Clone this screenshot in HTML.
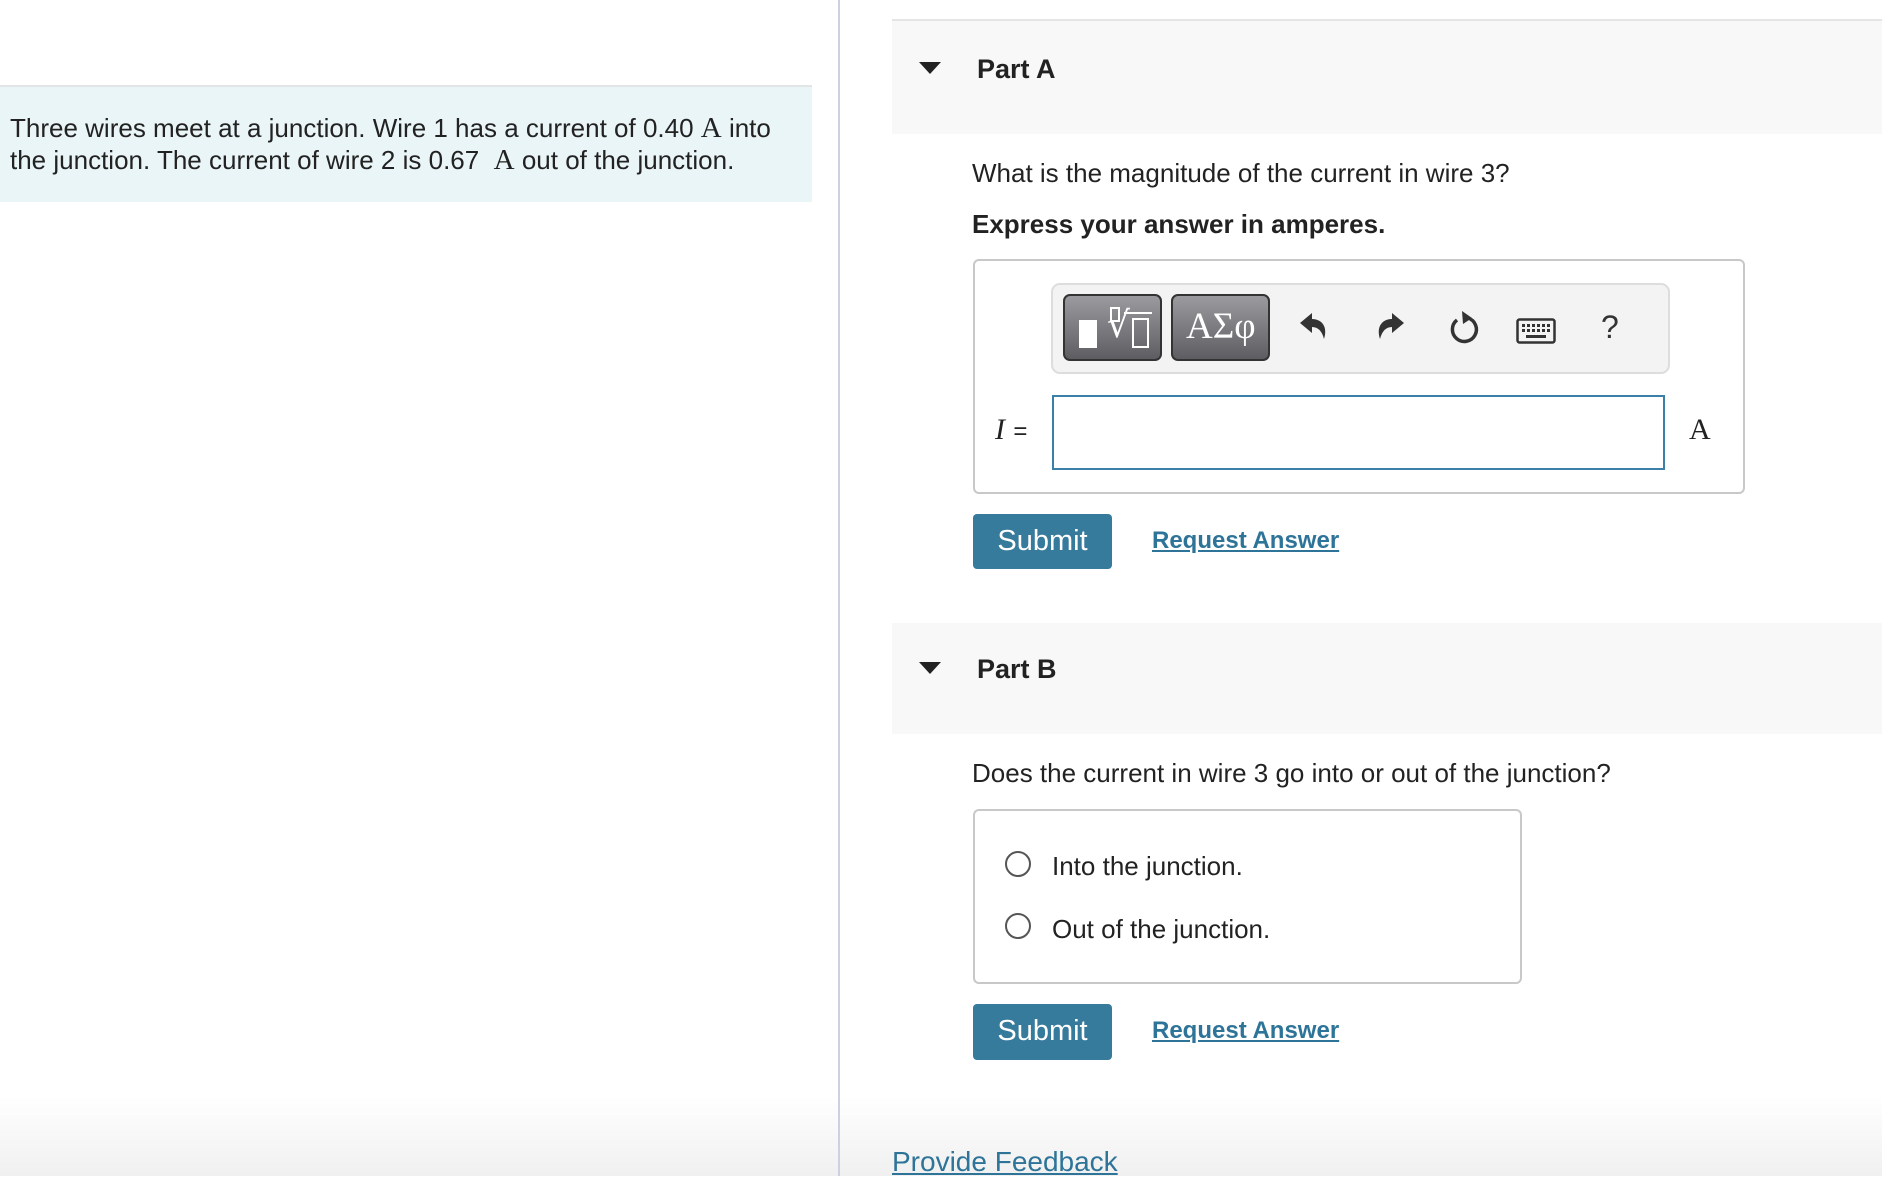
<!DOCTYPE html>
<html><head><meta charset="utf-8"><style>
*{margin:0;padding:0;box-sizing:border-box}
body{width:1882px;height:1176px;overflow:hidden;background:#fff;font-family:"Liberation Sans",Arial,sans-serif;color:#222;position:relative}
.abs{position:absolute}
.fade{left:0;right:0;bottom:0;height:80px;background:linear-gradient(#fff0,#f0f0f0)}
.t{white-space:nowrap}
.serif{font-family:"Liberation Serif",serif}
.hdr{left:892px;right:0;background:#f8f8f8}
.tri{width:0;height:0;border-left:11px solid transparent;border-right:11px solid transparent;border-top:12px solid #222}
.btn{background:#367a9c;color:#fff;border-radius:4px;font-size:29px;text-align:center;line-height:55px}
.link{color:#2e7498;font-weight:bold;text-decoration:underline;font-size:24px}
.tb{background:linear-gradient(#9a9a9f,#5e5e62);border:2px solid #333;border-radius:7px}
.radio{width:26px;height:26px;border:2px solid #555;border-radius:50%;background:#fff}
</style></head><body>
<div class="abs fade"></div>
<div class="abs" style="left:0;top:85px;width:812px;height:2px;background:#e2e4e6"></div>
<div class="abs" style="left:0;top:87px;width:812px;height:115px;background:#eaf5f7"></div>
<div class="abs t" style="left:10px;top:112px;font-size:26px;line-height:32px">Three wires meet at a junction. Wire 1 has a current of 0.40 <span class="serif" style="font-size:29px">A</span> into<br>the junction. The current of wire 2 is 0.67 &nbsp;<span class="serif" style="font-size:29px">A</span> out of the junction.</div>
<div class="abs" style="left:838px;top:0;width:2px;height:1176px;background:#c9d2de"></div>

<div class="abs" style="left:892px;top:19px;right:0;height:2px;background:#e5e5e5"></div>
<div class="abs hdr" style="top:21px;height:113px"></div>
<div class="abs tri" style="left:919px;top:62px"></div>
<div class="abs t" style="left:977px;top:54px;font-size:27px;font-weight:bold">Part A</div>
<div class="abs t" style="left:972px;top:158px;font-size:26px">What is the magnitude of the current in wire 3?</div>
<div class="abs t" style="left:972px;top:209px;font-size:26px;font-weight:bold">Express your answer in amperes.</div>

<div class="abs" style="left:973px;top:259px;width:772px;height:235px;border:2px solid #c8c8c8;border-radius:6px"></div>
<div class="abs" style="left:1051px;top:283px;width:619px;height:91px;background:#f3f3f3;border:2px solid #ddd;border-radius:9px"></div>
<div class="abs tb" style="left:1063px;top:294px;width:99px;height:67px"></div>
<div class="abs" style="left:1079px;top:320px;width:18px;height:28px;background:#fff"></div>
<div class="abs t" style="left:1107px;top:305px;color:#fff;font-size:36px;font-family:'DejaVu Sans',sans-serif">√</div>
<div class="abs" style="left:1110px;top:307px;width:10px;height:15px;border:2px solid #fff"></div>
<div class="abs" style="left:1124px;top:312px;width:28px;height:2px;background:#fff"></div>
<div class="abs" style="left:1132px;top:318px;width:17px;height:30px;border:2px solid #fff"></div>
<div class="abs tb" style="left:1171px;top:294px;width:99px;height:67px"></div>
<div class="abs t serif" style="left:1186px;top:305px;color:#fff;font-size:37px">ΑΣφ</div>
<svg class="abs" style="left:1298px;top:311px" width="32" height="36" viewBox="0 0 32 36"><path d="M2 12 L14 2 L14 8 C24 8 30 16 26 28 C24 20 20 16 14 16 L14 22 Z" fill="#333"/></svg>
<svg class="abs" style="left:1374px;top:311px" width="32" height="36" viewBox="0 0 32 36"><path d="M30 12 L18 2 L18 8 C8 8 2 16 6 28 C8 20 12 16 18 16 L18 22 Z" fill="#333"/></svg>
<svg class="abs" style="left:1446px;top:309px" width="34" height="40" viewBox="0 0 34 40"><path d="M11 11 A12 12 0 1 0 22 9" fill="none" stroke="#333" stroke-width="3.5"/><path d="M16 2 L26 9 L17 15 Z" fill="#333"/></svg>
<svg class="abs" style="left:1516px;top:318px" width="40" height="26" viewBox="0 0 40 26"><rect x="1.5" y="1.5" width="37" height="23" rx="2" fill="none" stroke="#333" stroke-width="2.5"/><g fill="#333"><rect x="6" y="6" width="3" height="3"/><rect x="11" y="6" width="3" height="3"/><rect x="16" y="6" width="3" height="3"/><rect x="21" y="6" width="3" height="3"/><rect x="26" y="6" width="3" height="3"/><rect x="31" y="6" width="3" height="3"/><rect x="6" y="11" width="3" height="3"/><rect x="11" y="11" width="3" height="3"/><rect x="16" y="11" width="3" height="3"/><rect x="21" y="11" width="3" height="3"/><rect x="26" y="11" width="3" height="3"/><rect x="31" y="11" width="3" height="3"/><rect x="10" y="17" width="20" height="3"/></g></svg>
<div class="abs t" style="left:1601px;top:309px;font-size:32px;color:#333">?</div>

<div class="abs t" style="left:995px;top:413px;font-size:30px"><span class="serif" style="font-style:italic">I</span> <span style="font-size:24px">=</span></div>
<div class="abs" style="left:1052px;top:395px;width:613px;height:75px;border:2px solid #3a80a8"></div>
<div class="abs t serif" style="left:1689px;top:413px;font-size:30px">A</div>

<div class="abs btn t" style="left:973px;top:514px;width:139px;height:55px">Submit</div>
<div class="abs t link" style="left:1152px;top:527px">Request Answer</div>

<div class="abs hdr" style="top:623px;height:111px"></div>
<div class="abs tri" style="left:919px;top:662px"></div>
<div class="abs t" style="left:977px;top:654px;font-size:27px;font-weight:bold">Part B</div>
<div class="abs t" style="left:972px;top:758px;font-size:26px">Does the current in wire 3 go into or out of the junction?</div>
<div class="abs" style="left:973px;top:809px;width:549px;height:175px;border:2px solid #c8c8c8;border-radius:6px"></div>
<div class="abs radio" style="left:1005px;top:851px"></div>
<div class="abs t" style="left:1052px;top:851px;font-size:26px">Into the junction.</div>
<div class="abs radio" style="left:1005px;top:913px"></div>
<div class="abs t" style="left:1052px;top:914px;font-size:26px">Out of the junction.</div>
<div class="abs btn t" style="left:973px;top:1004px;width:139px;height:56px">Submit</div>
<div class="abs t link" style="left:1152px;top:1017px">Request Answer</div>
<div class="abs t" style="left:892px;top:1146px;font-size:28px;color:#2e7498;text-decoration:underline">Provide Feedback</div>
</body></html>
